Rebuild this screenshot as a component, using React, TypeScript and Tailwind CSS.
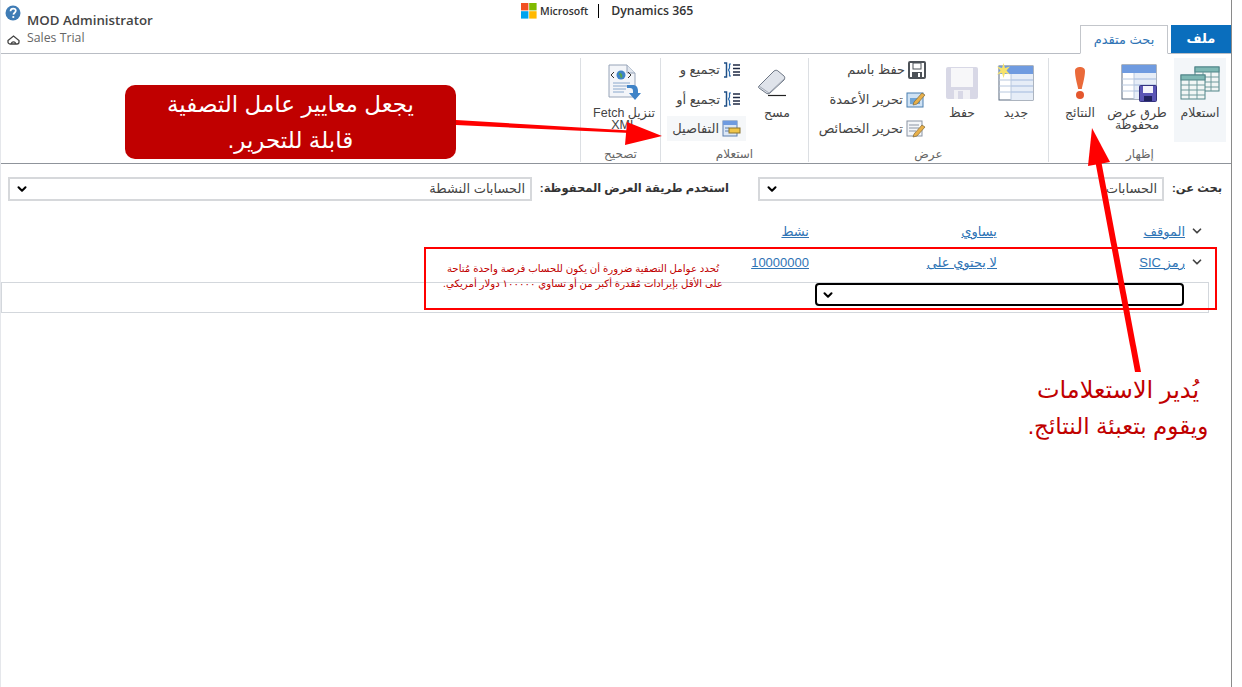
import type { ReactNode } from "react";
import { ChevronDown } from "lucide-react";

function HelpIcon() {
  return (
    <svg width="16" height="16" viewBox="0 0 16 16">
      <circle cx="8" cy="8" r="7.5" fill="#3f7cb5" />
      <path d="M5.5 6.2C5.6 4.400 6.800 3.600 8.200 3.600c1.500 0 2.600.9 2.600 2.200 0 1.900-2.300 2-2.400 3.800" fill="none" stroke="#fff" strokeWidth="1.7" />
      <circle cx="8.3" cy="12" r="1.1" fill="#fff" />
    </svg>
  );
}

function HomeIcon() {
  return (
    <svg width="13" height="10" viewBox="0 0 13 10" fill="none" stroke="#444" strokeWidth="1.3">
      <path d="M1 5.500l5.500-4.500L12 5.500v1.500c0 1-.8 2-2 2H3c-1.200 0-2-1-2-2z" />
      <path d="M4.500 9c0-2.800 4-2.800 4 0" />
    </svg>
  );
}

function MsLogo() {
  return (
    <svg width="16" height="16" viewBox="0 0 16 16">
      <rect x="0" y="0" width="7.4" height="7.4" fill="#f25022" />
      <rect x="8.2" y="0" width="7.4" height="7.4" fill="#7fba00" />
      <rect x="0" y="8.2" width="7.4" height="7.4" fill="#00a4ef" />
      <rect x="8.2" y="8.2" width="7.4" height="7.4" fill="#ffb900" />
    </svg>
  );
}

function SmallGrid({ x, y }: { x: number; y: number }) {
  return (
    <g>
      <rect x={x} y={y} width="24" height="24" fill="#f1f6f5" stroke="#4f8487" />
      <rect x={x} y={y} width="24" height="5" fill="#7fb8b4" stroke="#4f8487" />
      <path d={`M${x} ${y + 10}h24M${x} ${y + 15}h24M${x} ${y + 20}h24M${x + 8} ${y + 5}v19M${x + 16} ${y + 5}v19`} stroke="#6f9a9c" />
    </g>
  );
}

function QueryIcon() {
  return (
    <svg width="40" height="34" viewBox="0 0 40 34">
      <SmallGrid x={15} y={1} />
      <SmallGrid x={1} y={9} />
    </svg>
  );
}

function TableIcon() {
  return (
    <svg width="36" height="36" viewBox="0 0 36 36">
      <rect x="1" y="1" width="34" height="34" fill="#fff" stroke="#5a6b80" />
      <rect x="1" y="1" width="34" height="8" fill="#6f9be0" />
      <rect x="13" y="9" width="22" height="26" fill="#e6edf7" />
      <path d="M13 15h22M13 21h22M13 27h22" stroke="#c4d3ea" strokeWidth="2" />
      <path d="M1 15h12M1 21h12M1 27h12M13 9v26" stroke="#b8c8de" />
    </svg>
  );
}

function SavedViewsIcon() {
  return (
    <div className="relative w-[40px] h-[38px]">
      <TableIcon />
      <svg className="absolute right-0 bottom-0" width="18" height="17" viewBox="0 0 18 17">
        <rect x="0.5" y="0.5" width="17" height="16" rx="1" fill="#5a55b5" stroke="#35337f" />
        <rect x="4" y="1" width="10" height="7" fill="#f4f4fb" />
        <rect x="5" y="11" width="8" height="5" fill="#20225f" />
      </svg>
    </div>
  );
}

function ResultsIcon() {
  return (
    <svg width="14" height="34" viewBox="0 0 14 34">
      <path d="M2 5C2 2 4.500 1 7 1s5 1 5 4c0 6-2.500 14-3.200 18H5.200C4.500 19 2 11 2 5z" fill="#ea6a3a" />
      <circle cx="7" cy="29" r="4" fill="#e4572e" />
    </svg>
  );
}

function NewIcon() {
  return (
    <div className="relative w-[36px] h-[36px]">
      <TableIcon />
      <svg className="absolute -left-[2px] -top-[2px]" width="15" height="15" viewBox="0 0 15 15">
        <path d="M7.500 0l1.500 5 5-1.500-3.500 4 3.500 4-5-1.500-1.500 5-1.500-5-5 1.500 3.500-4-3.500-4 5 1.500z" fill="#f6e26b" />
      </svg>
    </div>
  );
}

function SaveIcon() {
  return (
    <svg width="34" height="34" viewBox="0 0 34 34">
      <rect x="1" y="1" width="32" height="32" rx="2" fill="#d8d8e6" />
      <rect x="6" y="2" width="22" height="19" fill="#f7f7f9" />
      <rect x="9" y="24" width="16" height="9" fill="#f1f1f5" />
      <rect x="13" y="25" width="5" height="8" fill="#d8d8e6" />
    </svg>
  );
}

function SaveAsIcon() {
  return (
    <svg width="18" height="18" viewBox="0 0 18 18">
      <rect x="1" y="1" width="16" height="16" rx="1" fill="#fff" stroke="#4d5258" strokeWidth="2" />
      <rect x="5" y="2" width="8" height="6" fill="#fff" stroke="#4d5258" />
      <rect x="4" y="11" width="10" height="6" fill="#4d5258" />
      <rect x="10" y="12" width="2" height="4" fill="#fff" />
    </svg>
  );
}

function EditColumnsIcon() {
  return (
    <svg width="20" height="18" viewBox="0 0 20 18">
      <rect x="1" y="3" width="16" height="14" fill="#cfe2f4" stroke="#4a7fb0" />
      <rect x="4" y="8" width="10" height="6" fill="#6fa4d6" />
      <path d="M8 12l8-9 3 2-8 9-4 1z" fill="#e8b04a" stroke="#80683a" strokeWidth="0.7" />
    </svg>
  );
}

function EditPropsIcon() {
  return (
    <svg width="20" height="18" viewBox="0 0 20 18">
      <rect x="1" y="1" width="15" height="15" fill="#f4f6f9" stroke="#8a94a3" />
      <path d="M3 5h10M3 8h10M3 11h7" stroke="#8a94a3" />
      <path d="M8 14l8-9 3 2-8 9-4 1z" fill="#e8b04a" stroke="#80683a" strokeWidth="0.7" />
    </svg>
  );
}

function ClearIcon() {
  return (
    <svg width="30" height="28" viewBox="0 0 30 28" className="mr-[10px]">
      <path d="M2 17L17 2c1.500-1 3-1 4 0l6 5c1 1 1 2.500 0 4L13 24c-1 1-3 1-4 0l-7-5c-.8-.6-.8-1.300 0-2z" fill="#dfe3ea" stroke="#6d7684" />
      <path d="M2 17l10 7 15-14" fill="none" stroke="#a2a9b5" />
      <path d="M11 26.500h18" stroke="#222" strokeWidth="1.200" />
    </svg>
  );
}

function GroupIcon() {
  return (
    <svg width="18" height="16" viewBox="0 0 18 16" fill="none">
      <path d="M1 1h2.500v14H1" strokeWidth="1.500" stroke="#1f4f86" />
      <path d="M8 2H6.500v4l-1 2 1 2v4H8" strokeWidth="1.200" stroke="#2b6cb0" />
      <path d="M10 3h7M10 6.500h7M10 10h7M10 13h7" strokeWidth="1.500" stroke="#1f2a44" />
    </svg>
  );
}

function DetailsIcon() {
  return (
    <svg width="19" height="17" viewBox="0 0 19 17">
      <rect x="1" y="1" width="14" height="15" fill="#dbe7f6" stroke="#5c7fae" />
      <rect x="1" y="1" width="14" height="4" fill="#6f9be0" />
      <path d="M3 8h4M3 11h4" stroke="#5c7fae" />
      <rect x="7" y="8" width="11" height="5" fill="#f0c548" stroke="#8a7430" />
    </svg>
  );
}

function FetchIcon() {
  return (
    <svg width="36" height="38" viewBox="0 0 36 38">
      <path d="M3 1h18l8 8v24H3z" fill="#f3f5f9" stroke="#97a4b8" />
      <path d="M21 1v8h8" fill="#dfe5ee" stroke="#97a4b8" />
      <circle cx="15" cy="11" r="4.500" fill="#3f83c7" />
      <path d="M13 9.500c2 .5 3 2 2 4" fill="none" stroke="#57a645" strokeWidth="2" />
      <path d="M8 8l-3 3 3 3M22 8l3 3-3 3" fill="none" stroke="#333" />
      <path d="M7 19h17M7 22h17M7 25h13M7 28h11" stroke="#8aa8cc" />
      <path d="M21 21h6c3 0 5 2 5 6v2h3l-6 7-6-7h4v-2c0-2-1-3-3-3h-3z" fill="#3f83c7" />
    </svg>
  );
}

function BigButton({ icon, label, width, active }: { icon: ReactNode; label: string; width: string; active?: boolean }) {
  return (
    <div className={`flex flex-col items-center pt-[5px] h-[84px] shrink-0 ${width} ${active ? "bg-[#f3f6f9]" : ""}`}>
      <div className="h-[40px] flex items-center justify-center">{icon}</div>
      <div className="text-[12.500px] leading-[12px] text-center mt-[4px] text-[#444]">{label}</div>
    </div>
  );
}

function SmallButton({ icon, label, active }: { icon: ReactNode; label: string; active?: boolean }) {
  return (
    <div className="flex items-center h-[29.5px]">
      <div className={`flex items-center gap-[3px] h-[25px] whitespace-nowrap text-[13px] text-[#444] ${active ? "bg-[#f5f7f9] pr-[5px] pl-[5px] -mr-[5px]" : ""}`}>
        {icon}
        <span>{label}</span>
      </div>
    </div>
  );
}

function RibbonGroup({ label, width, children }: { label: string; width: string; children: ReactNode }) {
  return (
    <div className={`flex flex-col h-[104px] border-l border-[#dcdfe3] shrink-0 ${width}`}>
      <div className="flex h-[84px]">{children}</div>
      <div className="text-[12px] text-[#666] text-center leading-[24px]">{label}</div>
    </div>
  );
}

function Select({ value, width }: { value: string; width: string }) {
  return (
    <div className={`flex items-center justify-between h-[24px] border-2 border-[#d6d8db] px-[5px] ${width}`}>
      <span className="text-[13px] text-[#444]">{value}</span>
      <ChevronDown size={14} strokeWidth={3.5} className="text-black" />
    </div>
  );
}

function Link({ children }: { children: ReactNode }) {
  return <span className="text-[13px] text-[#2f74b5] underline whitespace-nowrap">{children}</span>;
}

function CriteriaRow({ field, op, value, top }: { field: string; op: string; value: string; top: string }) {
  return (
    <div className={`flex items-center h-[20px] pr-[25px] ${top}`}>
      <div className="w-[21px] pr-[2px]">
        <ChevronDown size={14} strokeWidth={3} className="text-[#444]" />
      </div>
      <div className="w-[188px]"><Link>{field}</Link></div>
      <div className="w-[188px]"><Link>{op}</Link></div>
      <div className="w-[188px]"><Link>{value}</Link></div>
    </div>
  );
}

export default function App() {
  return (
    <div className="relative w-[1242px] h-[687px] overflow-hidden bg-white font-['Liberation_Sans','DejaVu_Sans',sans-serif]">
      <div className="w-[1232px] h-[687px] border-r border-[#8a8a8a] border-l border-l-[#e5e7eb]">
        {/* Top bar */}
        <div className="flex h-[54px] border-b border-[#b9bdc4]">
          <div className="w-[520px] pl-[4px] pt-[5px] flex gap-[6px]">
            <div className="flex flex-col items-center gap-[14px]">
              <HelpIcon />
              <HomeIcon />
            </div>
            <div className="pt-[8px] font-['Open_Sans',sans-serif]">
              <div className="text-[13.3px] leading-[14px] font-semibold text-[#444]">MOD Administrator</div>
              <div className="text-[12.3px] leading-[14px] mt-[4px] text-[#666]">Sales Trial</div>
            </div>
          </div>
          <div className="flex items-start pt-[2px] font-['Open_Sans',sans-serif] text-[#333]">
            <div className="pt-[1px]"><MsLogo /></div>
            <span className="text-[10.500px] leading-[18px] font-semibold ml-[3px]">Microsoft</span>
            <span className="w-px h-[14px] bg-black ml-[10px] mr-[12px] mt-[2px]" />
            <span className="text-[12.300px] leading-[18px] font-semibold">Dynamics 365</span>
          </div>
          <div dir="rtl" className="w-[152px] ml-auto flex items-end gap-[3px]">
            <div className="w-[60px] h-[28px] bg-[#0a6ebd] text-white text-[13px] font-bold flex items-center justify-center">ملف</div>
            <div className="w-[88px] h-[29px] -mb-px bg-white border border-[#c3c6cb] border-b-white text-[#2f74b5] text-[13px] flex items-center justify-center">بحث متقدم</div>
          </div>
        </div>

        {/* Ribbon */}
        <div dir="rtl" className="flex h-[110px] pt-[4px] border-b border-[#8f949b]">
          <RibbonGroup label="إظهار" width="w-[183px]">
            <div className="w-[5px]" />
            <BigButton icon={<QueryIcon />} label="استعلام" width="w-[52px] whitespace-nowrap" active />
            <BigButton icon={<SavedViewsIcon />} label="طرق عرض محفوظة" width="w-[74px]" />
            <BigButton icon={<ResultsIcon />} label="النتائج" width="w-[40px] whitespace-nowrap" />
          </RibbonGroup>
          <RibbonGroup label="عرض" width="w-[240px]">
            <BigButton icon={<NewIcon />} label="جديد" width="w-[64px]" />
            <BigButton icon={<SaveIcon />} label="حفظ" width="w-[44px]" />
            <div className="mr-[14px] -mt-[3px]">
              <SmallButton icon={<SaveAsIcon />} label="حفظ باسم" />
              <SmallButton icon={<EditColumnsIcon />} label="تحرير الأعمدة" />
              <SmallButton icon={<EditPropsIcon />} label="تحرير الخصائص" />
            </div>
          </RibbonGroup>
          <RibbonGroup label="استعلام" width="w-[148px]">
            <BigButton icon={<ClearIcon />} label="مسح" width="w-[62px]" />
            <div className="-mt-[3px] mr-[5px]">
              <SmallButton icon={<GroupIcon />} label="تجميع و" />
              <SmallButton icon={<GroupIcon />} label="تجميع أو" />
              <SmallButton icon={<DetailsIcon />} label="التفاصيل" active />
            </div>
          </RibbonGroup>
          <RibbonGroup label="تصحيح" width="w-[80px]">
            <BigButton icon={<FetchIcon />} label="تنزيل Fetch XML" width="w-[72px] px-[1px]" />
          </RibbonGroup>
        </div>

        {/* Look for / saved view */}
        <div dir="rtl" className="flex items-center mt-[13px] h-[24px] pr-[9px]">
          <span className="text-[11.500px] font-bold text-[#333] w-[58px] whitespace-nowrap">بحث عن:</span>
          <Select value="الحسابات" width="w-[406px]" />
          <span className="text-[11.500px] font-bold text-[#333] w-[226px] pr-[29px] whitespace-nowrap">استخدم طريقة العرض المحفوظة:</span>
          <Select value="الحسابات النشطة" width="w-[524px]" />
        </div>

        {/* Criteria */}
        <div dir="rtl">
          <CriteriaRow field="الموقف" op="يساوي" value="نشط" top="mt-[20px]" />
          <CriteriaRow field="رمز SIC" op="لا يحتوي على" value="10000000" top="mt-[11px]" />
          <div className="h-[31px] mt-[10px] w-[1208px] mr-[22px] border border-[#d3d7dc] pr-[24px]">
            <div className="w-[369px] h-[23px] border-2 border-black rounded-[4px] flex items-center pl-[4px]" dir="ltr">
              <ChevronDown size={14} strokeWidth={3.5} className="text-black" />
            </div>
          </div>
        </div>
      </div>

      {/* Annotations over the page */}
      <div className="absolute left-[424px] top-[247px] w-[793px] h-[63px] border-2 border-[#ff0000] pointer-events-none" />
      <div dir="rtl" className="absolute left-[428px] top-[261px] w-[310px] text-center text-[10.200px] leading-[15px] text-[#c00000]">
        <div className="whitespace-nowrap">تُحدد عوامل التصفية ضرورة أن يكون للحساب فرصة واحدة مُتاحة</div>
        <div className="whitespace-nowrap">على الأقل بإيرادات مُقدرة أكبر من أو تساوي ١٠٠٠٠٠ دولار أمريكي.</div>
      </div>
      <div dir="rtl" className="absolute left-[125px] top-[85px] w-[331px] h-[74px] rounded-[10px] bg-[#c00000] text-white text-[23px] leading-[36px] text-center flex flex-col justify-center">
        <div>يجعل معايير عامل التصفية</div>
        <div>قابلة للتحرير.</div>
      </div>
      <div dir="rtl" className="absolute left-[1018px] top-[371px] w-[200px] text-[#c00000] text-[24px] leading-[37px] text-center">
        <div>يُدير الاستعلامات</div>
        <div className="whitespace-nowrap text-[23px]">ويقوم بتعبئة النتائج.</div>
      </div>
      <svg className="absolute left-0 top-0 pointer-events-none" width="1242" height="687">
        <path d="M456 120L630 130.500V133L456 125z" fill="#ff0000" />
        <path d="M627 122L662 136L625 145z" fill="#ff0000" />
        <path d="M1095 160L1101 160L1141 372L1135 372z" fill="#ff0000" />
        <path d="M1092 128L1110 162L1088 166z" fill="#ff0000" />
      </svg>
    </div>
  );
}
